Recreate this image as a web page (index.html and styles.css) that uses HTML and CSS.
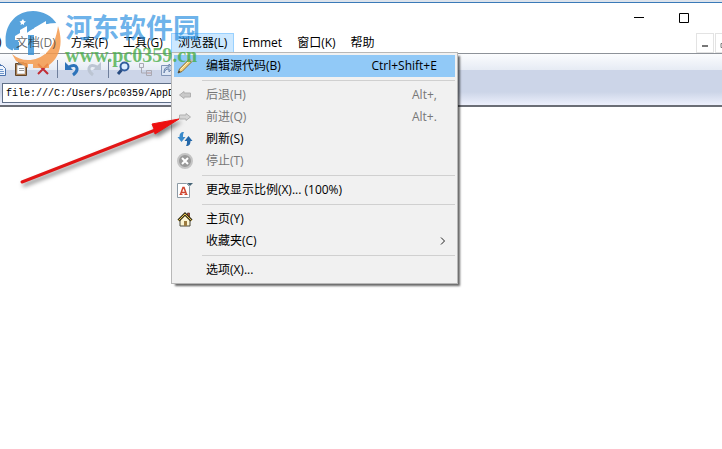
FILE: index.html
```
<!DOCTYPE html>
<html lang="zh-CN">
<head>
  <meta charset="UTF-8">
  <meta name="viewport" content="width=device-width, initial-scale=1.0">
  <title>浏览器</title>
  <link rel="stylesheet" href="styles.css">
</head>
<body>
  <div class="titlebar">
    <button class="win-btn" aria-label="Minimize"><svg width="10" height="10"><path d="M0 4.500h10" stroke="#000"/></svg></button>
    <button class="win-btn" aria-label="Maximize"><svg width="10" height="10"><path d="M.5.5h9v9h-9z" fill="none" stroke="#000"/></svg></button>
  </div>

  <div class="menu-row">
    <nav class="menubar">
      <span class="menu-edge">)</span>
      <button class="menu-btn faded">文档(D)</button>
      <button class="menu-btn">方案(F)</button>
      <button class="menu-btn">工具(G)</button>
      <div class="menu-open">
        <button class="menu-btn active">浏览器(L)</button>
        <div class="dropdown">
          <button class="item selected">
            <svg width="16" height="16" viewBox="0 0 16 16"><path d="M1 15l1.500-4L12 1.500l2.500 2.500L5 13.500z" fill="#f6d27a" stroke="#8a6a35"/><path d="M3.500 11.500l9-9" stroke="#fff3c4"/><path d="M1 15l1-2.500 1.500 1.500z" fill="#333"/><path d="M12 1.500l1-1 2.500 2.500-1 1z" fill="#e8aba0"/></svg>
            <span>编辑源代码(B)</span><kbd>Ctrl+Shift+E</kbd>
          </button>
          <hr>
          <button class="item" disabled>
            <svg width="16" height="16" viewBox="0 0 16 16"><path d="M2.500 8L7 4.500V6h6.500v4H7v1.500z" fill="#c9c9c9" stroke="#b0b0b0"/></svg>
            <span>后退(H)</span><kbd>Alt+,</kbd>
          </button>
          <button class="item" disabled>
            <svg width="16" height="16" viewBox="0 0 16 16"><path d="M13.500 8L9 4.500V6H2.500v4H9v1.500z" fill="#d4d4d4" stroke="#b0b0b0"/></svg>
            <span>前进(Q)</span><kbd>Alt+.</kbd>
          </button>
          <button class="item">
            <svg width="16" height="16" viewBox="0 0 16 16"><path d="M7 1C3.500 1 2.500 3 2.500 6H.5l4 5 4-5H6C6 4 6 3 7 1z" fill="#3a8acb"/><path d="M9 15c3.500 0 4.500-2 4.500-5h2l-4-5-4 5H10c0 2 0 3-1 5z" fill="#2467a8"/></svg>
            <span>刷新(S)</span>
          </button>
          <button class="item" disabled>
            <svg width="16" height="16" viewBox="0 0 16 16"><circle cx="8" cy="8" r="7" fill="#999" stroke="#c4c4c4" stroke-width="2"/><path d="M5 5l6 6M11 5l-6 6" stroke="#fff" stroke-width="2"/></svg>
            <span>停止(T)</span>
          </button>
          <hr>
          <button class="item">
            <svg width="16" height="16" viewBox="0 0 16 16"><path d="M.5 1.500h9l3 3v11H.5z" fill="#fff" stroke="#8c9aa5"/><path d="M3.500 12.500l2.500-7h1l2.500 7M4.500 10.500h4" fill="none" stroke="#cf4530" stroke-width="1.500"/><path d="M2.500 12.500h3M7.500 12.500h3" stroke="#cf4530"/><path d="M10 1h6l-3 3z" fill="#456476"/></svg>
            <span>更改显示比例(X)... (100%)</span>
          </button>
          <hr>
          <button class="item">
            <svg width="16" height="16" viewBox="0 0 16 16"><path d="M10.500 2h2v4h-2z" fill="#b04a36" stroke="#4b2a1c" stroke-width=".7"/><path d="M3 8l5-5 5 5v7H3z" fill="#fbf4d2" stroke="#4c4a3a"/><path d="M1.500 9.500L8 3l6.500 6.500" fill="none" stroke="#3b3319" stroke-width="3"/><path d="M1.500 9.500L8 3l6.500 6.500" fill="none" stroke="#e6c34f"/><path d="M7 10h3v5H7z" fill="#9c7b40"/></svg>
            <span>主页(Y)</span>
          </button>
          <button class="item">
            <i></i>
            <span>收藏夹(C)</span>
            <svg class="chevron" width="6" height="10" viewBox="0 0 6 10"><path d="M1 1.500L4.500 5 1 8.500" fill="none" stroke="#222"/></svg>
          </button>
          <hr>
          <button class="item"><i></i><span>选项(X)...</span></button>
        </div>
      </div>
      <button class="menu-btn">Emmet</button>
      <button class="menu-btn">窗口(K)</button>
      <button class="menu-btn">帮助</button>
    </nav>
    <div class="doc-btns">
      <button aria-label="Minimize document"><svg width="16" height="17"><path d="M5 11h6" stroke="#777" stroke-width="2"/></svg></button>
      <button aria-label="Restore document"><svg width="16" height="17"><path d="M5 8.500h6v4H5z" fill="none" stroke="#777"/></svg></button>
    </div>
  </div>

  <div class="toolbars">
    <div class="tools">
      <button aria-label="Copy"><svg width="16" height="16" viewBox="0 0 16 16"><path d="M1.500 1.500h6l3 3v8h-9z" fill="#eef4fd" stroke="#6687b8"/><path d="M5.500 4.500h6l3 3v7h-9z" fill="#eef4fd" stroke="#4a72ad"/><path d="M7 8.500h5M7 10.500h6M7 12.500h6" stroke="#6f97cc"/></svg></button>
      <button aria-label="Paste"><svg width="16" height="16" viewBox="0 0 16 16"><path d="M2.500 2.500h11v12h-11z" fill="#ad855c" stroke="#604529"/><path d="M4.500 4.500h7v8h-7z" fill="#fff" stroke="#ddd"/><path d="M6 7.500h5M6 9.500h5" stroke="#999"/><path d="M5 1h6v3H5z" fill="#77706a"/></svg></button>
      <button aria-label="Delete"><svg width="16" height="16" viewBox="0 0 16 16"><path d="M3 3l10 10M13 3L3 13" stroke="#c22c35" stroke-width="2"/></svg></button>
      <span class="divider"></span>
      <button aria-label="Undo"><svg width="16" height="16" viewBox="0 0 16 16"><path d="M5 6c8-5 11 3 4 8" fill="none" stroke="#2c73ba" stroke-width="3"/><path d="M1 1v8h8z" fill="#2c73ba"/></svg></button>
      <button aria-label="Redo"><svg width="16" height="16" viewBox="0 0 16 16"><path d="M11 6C3 1 0 9 7 14" fill="none" stroke="#bcc5d3" stroke-width="3"/><path d="M15 1v8H7z" fill="#bcc5d3"/></svg></button>
      <span class="divider"></span>
      <button aria-label="Find"><svg width="16" height="16" viewBox="0 0 16 16"><circle cx="9.500" cy="5.500" r="4" fill="#dcecff" stroke="#315e9f" stroke-width="2"/><path d="M6.500 9L3 13" stroke="#274b80" stroke-width="3"/></svg></button>
      <button aria-label="Tree"><svg width="16" height="16" viewBox="0 0 16 16"><path d="M2.500 2.500h4v4h-4zM9.500 9.500h5v5h-5zM4.500 7v5H9" fill="none" stroke="#a9a9b2"/><path d="M10 12h4" stroke="#b99"/></svg></button>
      <button aria-label="Open"><svg width="16" height="16" viewBox="0 0 16 16"><path d="M2.500 4.500h11v10h-11z" fill="#dce6f4" stroke="#8095b7"/><path d="M5 12c0-5 2-6 5-6V3l4 4-4 4V8c-3 0-4 1-5 4z" fill="#b9cae4" stroke="#6c86ae"/></svg></button>
    </div>
    <input class="address" type="text" aria-label="Address" value="file:///C:/Users/pc0359/AppData">
  </div>

  <div class="watermark">
    <svg width="58" height="60" viewBox="0 0 58 60">
      <path d="M2 37C-1 16 12 2 29 2c10 0 19 5 24 13-14-2-34 6-43 27-3-1-6-2-8-5z" fill="#3b93d6"/>
      <path d="M8 45c5 4 10 6 16 6 14 0 27-10 30-34 6 18 1 32-9 39v3H29v-4h-5v4l-12-7z" fill="#f59a4c"/>
      <path d="M11 27l5-3v-3l7-4v27h-7V31h-5zM30 19l12-7v33h-6V24h-6z" fill="#fff"/>
      <path d="M53 15C36 15 17 24 9 43" fill="none" stroke="#fff" stroke-width="2"/>
      <path d="M19 10l1 2 2 .5-2 1.500v2l-1.500-1-2 1 .5-2-1.500-1.500 2-.5z" fill="#fff"/>
      <path d="M24 26h6v20h-6zM10 33h5v8h-5z" fill="#3b93d6"/>
    </svg>
    <div class="brand">
      <div class="brand-name">河东软件园</div>
      <div class="brand-url">www.pc0359.cn</div>
    </div>
  </div>
  <svg class="arrow" width="170" height="80" viewBox="0 0 170 80"><path d="M6 69L142 16" stroke="#e21616" stroke-width="3" stroke-linecap="round"/><path d="M163 6l-24 15-1-5-2-5z" fill="#ed1010" stroke="#ed1010"/></svg>
</body>
</html>
```
FILE: styles.css
```
body {
  margin: 0;
  min-height: 100vh;
  background: #fff;
  color: #000;
  font: 12px "Open Sans", "Noto Sans CJK SC", sans-serif;
}
button {
  font: inherit;
  color: inherit;
  border: 0;
  padding: 0;
  background: none;
}
svg {
  display: block;
  flex: none;
}
.titlebar {
  height: 31px;
  border-top: 2px solid #dce3ec;
  box-shadow: inset 0 1px #3a7ab8;
  display: flex;
  justify-content: flex-end;
  align-items: center;
  gap: 35px;
  padding-right: 33px;
}
.menu-row {
  display: flex;
  justify-content: space-between;
  height: 20px;
}
.menubar {
  display: flex;
  gap: 1px;
  line-height: 18px;
}
.menu-edge {
  width: 8px;
  text-indent: -2px;
}
.menu-btn {
  display: block;
  height: 20px;
  padding: 0 7px;
  white-space: nowrap;
}
/* stays readable over the logo */
.faded {
  position: relative;
  z-index: 4;
  color: rgba(40, 40, 40, 0.7);
}
.menu-open {
  position: relative;
}
.active {
  background: #cce8ff;
  box-shadow: inset 0 0 0 1px #99d1ff;
}
.doc-btns {
  display: flex;
  gap: 1px;
  width: 26px;
  overflow: hidden;
}
.doc-btns button {
  flex: none;
  border: 1px solid #e3e3e3;
}
.toolbars {
  box-sizing: border-box;
  height: 54px;
  border-top: 1px solid #8d9299;
  border-bottom: 2px solid #6b6e76;
  background: linear-gradient(#fbfcfe, #e6ebf4 16px, #ccd5e8 16px, #ccd5e8 38px, #edf0fc);
}
.tools {
  display: flex;
  align-items: center;
  height: 29px;
  gap: 6px;
  margin-left: -9px;
}
.divider {
  width: 1px;
  height: 18px;
  background: #6f7f9c;
}
.address {
  display: block;
  box-sizing: border-box;
  width: 60%;
  height: 20px;
  margin-left: 2px;
  padding: 0 3px;
  border: 1px solid #5f6f88;
  background: #fff;
  color: #000;
  font: 10px "Liberation Mono", monospace;
}
.dropdown {
  position: absolute;
  z-index: 2;
  top: 19px;
  left: 0;
  box-sizing: border-box;
  width: 287px;
  padding: 2px;
  border: 1px solid #b8b8b8;
  background: #f1f1f1;
  box-shadow: 3px 3px 2px -1px rgba(0, 0, 0, 0.6);
}
.item {
  display: flex;
  align-items: center;
  width: 100%;
  height: 22px;
  padding: 0 18px 0 3px;
  white-space: nowrap;
}
.item i {
  width: 16px;
}
.item span {
  margin-left: 13px;
}
.item:disabled {
  color: #777;
}
.item kbd,
.chevron {
  margin-left: auto;
  font: inherit;
}
.chevron {
  margin-right: -9px;
}
.selected {
  background: #91c9f7;
}
.dropdown hr {
  height: 1px;
  margin: 3px 0 3px 28px;
  border: 0;
  background: #d0d0d0;
}
.watermark {
  position: absolute;
  z-index: 3;
  top: 9px;
  left: 4px;
  display: flex;
  pointer-events: none;
}
.watermark svg {
  opacity: 0.85;
}
.brand {
  padding-top: 2px;
  margin-left: 3px;
}
.brand-name {
  color: rgba(45, 145, 225, 0.7);
  font: bold 27px/32px "Noto Sans CJK SC", sans-serif;
}
.brand-url {
  color: rgba(65, 170, 65, 0.75);
  font: bold 20px/24px "Liberation Serif", serif;
}
.arrow {
  position: absolute;
  z-index: 3;
  top: 113px;
  left: 16px;
  filter: drop-shadow(2px 3px 2px rgba(0, 0, 0, 0.5));
}
```
